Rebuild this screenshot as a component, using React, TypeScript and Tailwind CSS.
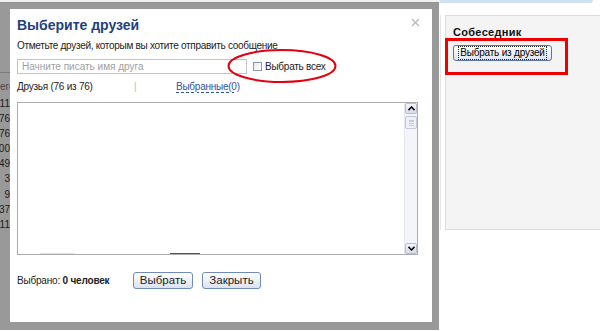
const counts = ["11", "76", "76", "200", "49", "3", "9", "37", "11"];

function Chevron({ up }: { up?: boolean }) {
  return (
    <svg width="7" height="5" viewBox="0 0 7 5">
      <path
        d={up ? "M0.5 4.2 L3.5 1 L6.5 4.2" : "M0.5 0.8 L3.5 4 L6.5 0.8"}
        fill="none"
        stroke="#111"
        strokeWidth="1.6"
      />
    </svg>
  );
}

function ScrollButton({ up }: { up?: boolean }) {
  return (
    <div className="flex h-[11px] w-[12px] items-center justify-center rounded-[2px] border border-[#b7bfd3] bg-gradient-to-b from-[#f4f6fb] to-[#d6dcea]">
      <Chevron up={up} />
    </div>
  );
}

function DialogButton({ label, width }: { label: string; width: string }) {
  return (
    <button
      className={`flex h-[17px] ${width} items-center justify-center rounded-[3px] border border-[#6f8bbb] bg-gradient-to-b from-white to-[#dce2ee] text-[11.5px] leading-none text-[#222]`}
    >
      {label}
    </button>
  );
}

export default function App() {
  return (
    <div className="relative h-[331px] w-[600px] overflow-hidden bg-white font-['Liberation_Sans',Arial,sans-serif] text-black">
      {/* page underneath */}
      <div className="flex h-full">
        <div className="flex w-[440px] flex-col">
          <div className="h-[3px] bg-[#f2f2f2]" />
          <div className="mt-[69px] h-px w-[12px] bg-[#cfcfcf]" />
          <div className="mt-[6px] w-[12px] overflow-hidden text-right text-[10px] leading-[15px] text-[#777]">
            его
          </div>
          <div className="mt-[2px] flex w-[12px] flex-col items-end text-[10px] leading-[15.1px] text-[#333]">
            {counts.map((c, i) => (
              <span key={i} className="pr-[2px]">
                {c}
              </span>
            ))}
          </div>
        </div>
        <div className="flex flex-1 flex-col">
          <div className="mr-[7px] h-[3px] rounded-br-[4px] bg-[#cfe1f2]" />
          <div className="mt-[12px] h-[215px] border-l border-[#e6e6e6] pl-[4px]">
            <div className="h-full border-l border-t border-b border-[#dcdcdc] bg-[#f4f4f4] pl-[7px] pt-[10px]">
              <div className="text-[11px] font-bold leading-[13px] tracking-[0.3px] text-[#111]">
                Собеседник
              </div>
              <button className="mt-[6px] flex h-[16px] w-[99px] items-center justify-center rounded-[3px] border border-[#5876ad] bg-gradient-to-b from-white to-[#dfe4ef] text-[10px] leading-none tracking-[-0.2px]">
                <span className="px-[1px] py-[1px] outline-1 outline-dotted outline-[#222]">
                  Выбрать из друзей
                </span>
              </button>
            </div>
          </div>
        </div>
      </div>

      {/* modal */}
      <div className="absolute left-0 top-[2px] h-[328px] w-[439px] border-[7px] border-b-[8px] border-l-[10px] border-black/40 bg-white bg-clip-padding">
        <div className="relative h-full pl-[7px] pr-[15px] pt-[8px]">
          <svg className="absolute right-[12px] top-[9px]" width="9" height="9" viewBox="0 0 9 9">
            <path d="M1 1 L8 8 M8 1 L1 8" stroke="#bdbdbd" strokeWidth="1.5" />
          </svg>
          <h2 className="text-[14px] font-bold leading-[16px] text-[#1f3f7d]">Выберите друзей</h2>
          <p className="mt-[7px] text-[10px] leading-[12px] tracking-[-0.3px] text-[#222]">
            Отметьте друзей, которым вы хотите отправить сообщение
          </p>
          <div className="mt-[7px] flex items-center">
            <div className="flex h-[15px] w-[230px] items-center border border-[#c4c4c4] px-[4px] text-[10px] text-[#a0a0a0]">
              Начните писать имя друга
            </div>
            <div className="ml-[6px] h-[9px] w-[9px] border border-[#8d9aae] bg-gradient-to-br from-[#e6e9ef] to-white" />
            <span className="ml-[3px] text-[10px] leading-[12px] tracking-[-0.25px] text-[#222]">
              Выбрать всех
            </span>
          </div>
          <div className="mt-[7px] flex text-[10px] leading-[12px] tracking-[-0.25px]">
            <span className="w-[117px] text-[#222]">Друзья (76 из 76)</span>
            <span className="w-[42px] text-[#bbb]">|</span>
            <span className="text-[#2f53a3] underline decoration-dashed underline-offset-2">
              Выбранные(0)
            </span>
          </div>
          <div className="mt-[9px] flex h-[153px] w-[401px] border border-[#adadad]">
            <div className="flex flex-1 items-end">
              <div className="ml-[22px] h-px w-[35px] bg-[#f2e48c]" />
              <div className="ml-[95px] h-px w-[30px] bg-[#555]" />
            </div>
            <div className="flex w-[13px] flex-col items-center border-l border-[#e4e7f0] bg-[#f3f5fb]">
              <ScrollButton up />
              <div className="mt-[2px] flex h-[13px] w-[12px] items-center justify-center rounded-[2px] border border-[#c3c9d8] bg-[#eef0f6]">
                <div className="h-[6px] w-[5px] border-y border-[#c7cbd6] bg-[repeating-linear-gradient(#c7cbd6_0_1px,transparent_1px_2px)]" />
              </div>
              <div className="flex-1" />
              <ScrollButton />
            </div>
          </div>
          <div className="mt-[17px] flex items-center">
            <span className="w-[116px] text-[10px] leading-[12px] tracking-[-0.2px] text-[#222]">
              Выбрано: <b>0 человек</b>
            </span>
            <DialogButton label="Выбрать" width="w-[60px]" />
            <div className="w-[9px]" />
            <DialogButton label="Закрыть" width="w-[59px]" />
          </div>
        </div>
      </div>

      {/* annotations */}
      <svg className="absolute left-[226px] top-[48px]" width="112" height="36" viewBox="0 0 112 36">
        <ellipse cx="56" cy="18" rx="53.5" ry="16" fill="none" stroke="#e4000f" strokeWidth="2" />
      </svg>
      <div className="absolute left-[445px] top-[38px] h-[37px] w-[123px] border-[3px] border-[#ee0000]" />
    </div>
  );
}
